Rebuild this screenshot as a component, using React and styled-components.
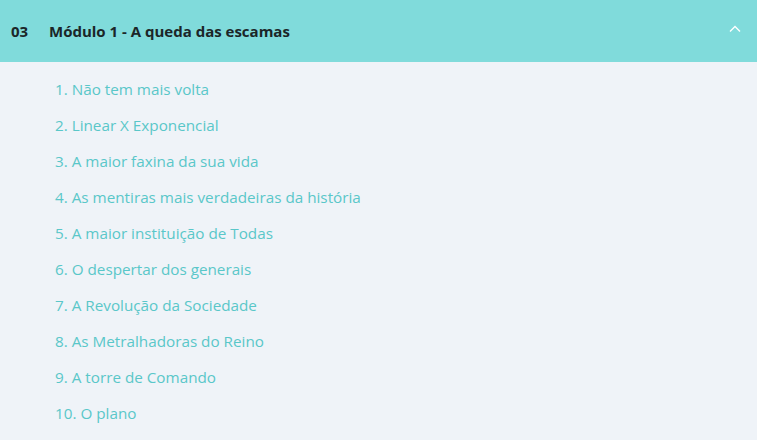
import React from "react";
import styled, { createGlobalStyle } from "styled-components";

const GlobalStyle = createGlobalStyle`
  body {
    margin: 0;
    background-color: #eff3f8;
    font-family: "Open Sans", Lato, sans-serif;
  }
`;

const Module = styled.section`
  width: 757px;
  height: 440px;
  background-color: #eff3f8;
  overflow: hidden;
`;

const ModuleHeader = styled.header`
  height: 62px;
  display: flex;
  align-items: center;
  padding: 0 15px 0 11px;
  background-color: #80dbdb;
  color: #1b2628;
  font-size: 15px;
  font-weight: 700;
`;

const ModuleNumber = styled.span`
  width: 38px;
`;

const ModuleTitle = styled.span`
  flex: 1;
`;

const Chevron = styled.svg`
  width: 14px;
  height: 14px;
  margin-top: -4px;
`;

const LessonList = styled.ol`
  list-style: none;
  margin: 0;
  padding: 9px 0 0 55px;
`;

const Lesson = styled.li`
  height: 36px;
  display: flex;
  align-items: center;
  color: #5ac7c9;
  font-size: 15.25px;
`;

const lessons = [
  "Não tem mais volta",
  "Linear X Exponencial",
  "A maior faxina da sua vida",
  "As mentiras mais verdadeiras da história",
  "A maior instituição de Todas",
  "O despertar dos generais",
  "A Revolução da Sociedade",
  "As Metralhadoras do Reino",
  "A torre de Comando",
  "O plano",
];

const App = () => {
  return (
    <>
      <GlobalStyle />
      <Module>
        <ModuleHeader>
          <ModuleNumber>03</ModuleNumber>
          <ModuleTitle>Módulo 1 - A queda das escamas</ModuleTitle>
          <Chevron viewBox="0 0 14 14" fill="none">
            <path d="M2 9.5 L7 4.5 L12 9.5" stroke="#fff" strokeWidth="1.4" />
          </Chevron>
        </ModuleHeader>
        <LessonList>
          {lessons.map((title, i) => (
            <Lesson key={title}>
              {i + 1}. {title}
            </Lesson>
          ))}
        </LessonList>
      </Module>
    </>
  );
};

export default App;
